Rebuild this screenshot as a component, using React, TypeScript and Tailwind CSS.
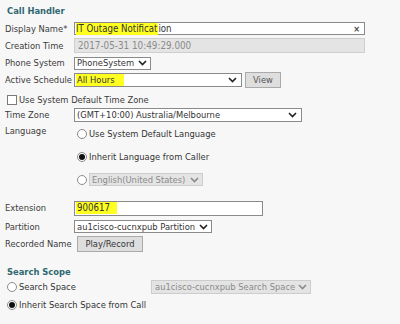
const font = { fontFamily: '"DejaVu Sans Condensed", "DejaVu Sans", sans-serif' };

function Chevron({ muted }: { muted?: boolean }) {
  return (
    <svg width="9" height="6" viewBox="0 0 9 6" className="shrink-0">
      <path d="M1 1 L4.5 4.5 L8 1" fill="none" stroke={muted ? "#8a8a8a" : "#222"} strokeWidth="1.6" />
    </svg>
  );
}

function Radio({ checked }: { checked?: boolean }) {
  return (
    <span className="w-[10px] h-[10px] rounded-full border border-[#8c8c8c] bg-white flex items-center justify-center shrink-0">
      {checked && <span className="w-[6px] h-[6px] rounded-full bg-[#111]" />}
    </span>
  );
}

function Label({ children }: { children: React.ReactNode }) {
  return <div className="w-[69px] shrink-0 text-[#3a3a3a] whitespace-nowrap">{children}</div>;
}

export default function App() {
  return (
    <div className="w-[400px] h-[324px] bg-[#f7f7f7] overflow-hidden text-[9.3px] leading-[12px] text-[#333] whitespace-nowrap" style={font}>
      <div className="pt-[4px] pl-[5px]">
        {/* Call Handler */}
        <div className="h-[13px] leading-[13px] pl-[2px] font-bold text-[#2e6870]">Call Handler</div>

        {/* Display Name */}
        <div className="mt-[5px] flex items-center h-[13px]">
          <Label>Display Name*</Label>
          <div className="w-[291px] h-[13px] bg-white border border-[#8a8a8a] flex items-center pl-[1px] pr-[4px] text-[9.6px]">
            <span className="bg-[#ffff20] h-[12px] leading-[12px] pr-[1px]">IT Outage Notificat</span>
            <span>ion</span>
            <span className="ml-auto text-[9px] font-bold text-[#444]">×</span>
          </div>
        </div>

        {/* Creation Time */}
        <div className="mt-[3px] flex items-center h-[15px]">
          <Label>Creation Time</Label>
          <div className="w-[291px] h-[15px] bg-[#e4e4e4] border border-[#cfcfcf] flex items-center pl-[3px] text-[#8a8a8a] text-[9.8px]">
            2017-05-31 10:49:29.000
          </div>
        </div>

        {/* Phone System */}
        <div className="mt-[4px] flex items-center h-[12px]">
          <Label>Phone System</Label>
          <div className="w-[77px] h-[13px] bg-white border border-[#8a8a8a] flex items-center pl-[2px] pr-[3px] justify-between">
            <span>PhoneSystem</span>
            <Chevron />
          </div>
        </div>

        {/* Active Schedule */}
        <div className="mt-[3px] flex items-center h-[16px]">
          <Label>Active Schedule</Label>
          <div className="w-[168px] h-[14px] bg-white border border-[#8a8a8a] flex items-center pl-[1px] pr-[4px] justify-between">
            <span className="bg-[#ffff20] h-[12px] leading-[12px] pl-[1px] pr-[9px]">All Hours</span>
            <Chevron />
          </div>
          <div className="ml-[3px] w-[36px] h-[16px] border border-[#aaa] bg-[#dedede] flex items-center justify-center text-[#555]">
            View
          </div>
        </div>

        {/* Use System Default Time Zone */}
        <div className="mt-[6px] flex items-center h-[12px] pl-[2px]">
          <span className="w-[10px] h-[10px] border border-[#7a7a7a] bg-white shrink-0" />
          <span className="ml-[2px] text-[#3a3a3a]">Use System Default Time Zone</span>
        </div>

        {/* Time Zone */}
        <div className="mt-[2px] flex items-center h-[14px]">
          <Label>Time Zone</Label>
          <div className="w-[228px] h-[14px] bg-white border border-[#8a8a8a] flex items-center pl-[2px] pr-[4px] justify-between">
            <span>(GMT+10:00) Australia/Melbourne</span>
            <Chevron />
          </div>
        </div>

        {/* Language */}
        <div className="flex">
          <div className="w-[69px] shrink-0 pt-[3px] text-[#3a3a3a]">Language</div>
          <div className="flex flex-col">
            <div className="h-[23px] flex items-center pl-[3px]">
              <Radio />
              <span className="ml-[2px]">Use System Default Language</span>
            </div>
            <div className="h-[23px] flex items-center pl-[3px]">
              <Radio checked />
              <span className="ml-[2px]">Inherit Language from Caller</span>
            </div>
            <div className="h-[23px] flex items-center pl-[3px]">
              <Radio />
              <div className="ml-[2px] w-[114px] h-[13px] bg-[#e4e4e4] border border-[#cdcdcd] flex items-center pl-[2px] pr-[3px] justify-between text-[#8a8a8a]">
                <span>English(United States)</span>
                <Chevron muted />
              </div>
            </div>
          </div>
        </div>

        {/* Extension */}
        <div className="mt-[10px] flex items-center h-[14px]">
          <Label>Extension</Label>
          <div className="w-[189px] h-[15px] bg-white border border-[#8a8a8a] flex items-center pl-[1px] text-[9.6px]">
            <span className="bg-[#ffff20] h-[12px] leading-[12px] pl-[1px] pr-[7px]">900617</span>
          </div>
        </div>

        {/* Partition */}
        <div className="mt-[5px] flex items-center h-[13px]">
          <Label>Partition</Label>
          <div className="w-[138px] h-[13px] bg-white border border-[#8a8a8a] flex items-center pl-[2px] pr-[3px] justify-between">
            <span>au1cisco-cucnxpub Partition</span>
            <Chevron />
          </div>
        </div>

        {/* Recorded Name */}
        <div className="mt-[3px] flex items-center h-[16px]">
          <Label>Recorded Name</Label>
          <div className="ml-[3px] w-[66px] h-[16px] border border-[#aaa] bg-[#dedede] flex items-center justify-center text-[#333]">
            Play/Record
          </div>
        </div>

        {/* Search Scope */}
        <div className="mt-[13px] h-[13px] leading-[13px] pl-[2px] font-bold text-[#2e6870]">Search Scope</div>

        <div className="mt-[2px] flex items-center h-[14px] pl-[2px]">
          <Radio />
          <span className="ml-[2px] w-[132px]">Search Space</span>
          <div className="w-[160px] h-[14px] bg-[#e4e4e4] border border-[#cdcdcd] flex items-center pl-[3px] pr-[3px] justify-between text-[#8a8a8a]">
            <span>au1cisco-cucnxpub Search Space</span>
            <Chevron muted />
          </div>
        </div>

        <div className="mt-[4px] flex items-center h-[14px] pl-[2px]">
          <Radio checked />
          <span className="ml-[2px]">Inherit Search Space from Call</span>
        </div>
      </div>
    </div>
  );
}
